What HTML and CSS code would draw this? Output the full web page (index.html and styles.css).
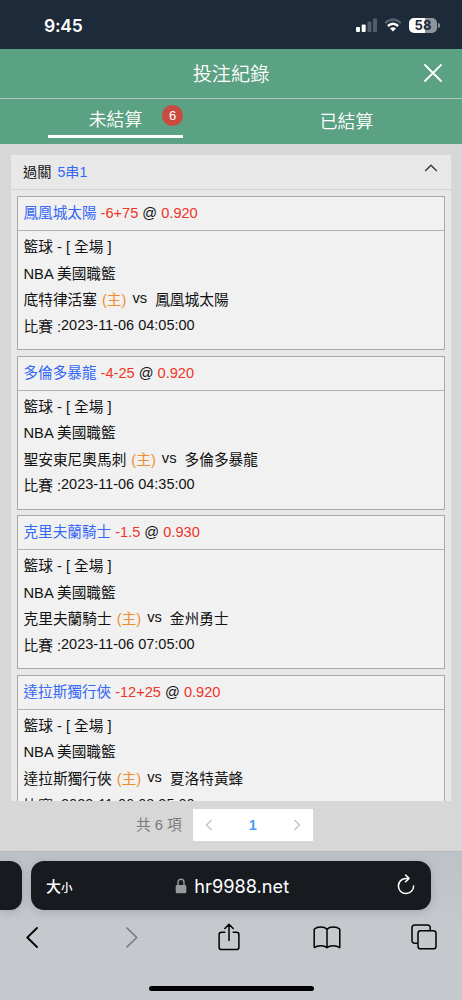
FILE: index.html
```html
<!DOCTYPE html>
<html lang="zh-Hant">
<head>
    <meta charset="UTF-8">
    <meta name="viewport" content="width=device-width, initial-scale=1.0">
    <title>投注紀錄</title>
    <link rel="stylesheet" href="styles.css">
</head>
<body>
    <div class="status-bar">
        <span class="time">9:45</span>
        <div class="status-icons">
            <svg width="22" height="14" viewBox="0 0 22 14">
                <rect x="0" y="9" width="4" height="5" rx="1" fill="#fff"/>
                <rect x="5.7" y="6.5" width="4" height="7.5" rx="1" fill="#fff"/>
                <rect x="11.4" y="3.5" width="4" height="10.5" rx="1" fill="#535d69"/>
                <rect x="17" y="0.5" width="4" height="13.5" rx="1" fill="#535d69"/>
            </svg>
            <svg class="wifi" width="18" height="14" viewBox="0 0 18 14">
                <path d="M1.2 5.2Q9-2 16.8 5.2" fill="none" stroke="#56606c" stroke-width="2.4"/>
                <path d="M3.9 8Q9 3.4 14.1 8" fill="none" stroke="#fff" stroke-width="2.4"/>
                <path d="M9 13.6L6 10.5Q9 8 12 10.5Z" fill="#fff"/>
            </svg>
            <div class="battery"><span>58</span></div>
        </div>
    </div>

    <div class="title-bar">
        <h1>投注紀錄</h1>
        <svg class="close" width="18" height="18" viewBox="0 0 18 18">
            <path d="M1 1L17 17M17 1L1 17" fill="none" stroke="#fff" stroke-width="1.8" stroke-linecap="round"/>
        </svg>
    </div>

    <div class="tabs">
        <div class="tab active"><span>未結算</span><span class="badge">6</span></div>
        <div class="tab"><span>已結算</span></div>
    </div>

    <div class="content">
        <div class="panel">
            <div class="panel-header">
                <span>過關</span>
                <span class="blue">5串1</span>
                <svg class="arrow" width="14" height="8" viewBox="0 0 14 8">
                    <path d="M1.2 7L7 1.2L12.8 7" fill="none" stroke="#333" stroke-width="1.3"/>
                </svg>
            </div>

            <div class="bet">
                <div class="bet-title"><span class="blue">鳳凰城太陽</span> <span class="red">-6+75</span> @ <span class="red">0.920</span></div>
                <div class="bet-info">
                    <div class="row">籃球 - [ 全場 ]</div>
                    <div class="row">NBA 美國職籃</div>
                    <div class="row">底特律活塞<span class="home">(主)</span><span class="vs">vs</span>鳳凰城太陽</div>
                    <div class="row">比賽 :<span class="date">2023-11-06 04:05:00</span></div>
                </div>
            </div>

            <div class="bet">
                <div class="bet-title"><span class="blue">多倫多暴龍</span> <span class="red">-4-25</span> @ <span class="red">0.920</span></div>
                <div class="bet-info">
                    <div class="row">籃球 - [ 全場 ]</div>
                    <div class="row">NBA 美國職籃</div>
                    <div class="row">聖安東尼奧馬刺<span class="home">(主)</span><span class="vs">vs</span>多倫多暴龍</div>
                    <div class="row">比賽 :<span class="date">2023-11-06 04:35:00</span></div>
                </div>
            </div>

            <div class="bet">
                <div class="bet-title"><span class="blue">克里夫蘭騎士</span> <span class="red">-1.5</span> @ <span class="red">0.930</span></div>
                <div class="bet-info">
                    <div class="row">籃球 - [ 全場 ]</div>
                    <div class="row">NBA 美國職籃</div>
                    <div class="row">克里夫蘭騎士<span class="home">(主)</span><span class="vs">vs</span>金州勇士</div>
                    <div class="row">比賽 :<span class="date">2023-11-06 07:05:00</span></div>
                </div>
            </div>

            <div class="bet">
                <div class="bet-title"><span class="blue">達拉斯獨行俠</span> <span class="red">-12+25</span> @ <span class="red">0.920</span></div>
                <div class="bet-info">
                    <div class="row">籃球 - [ 全場 ]</div>
                    <div class="row">NBA 美國職籃</div>
                    <div class="row">達拉斯獨行俠<span class="home">(主)</span><span class="vs">vs</span>夏洛特黃蜂</div>
                    <div class="row">比賽 :<span class="date">2023-11-06 08:35:00</span></div>
                </div>
            </div>
        </div>

        <div class="pagination">
            <span class="total">共 6 項</span>
            <div class="pager">
                <svg width="8" height="12" viewBox="0 0 8 12"><path d="M6.5 1L1.5 6L6.5 11" fill="none" stroke="#c0c4cc" stroke-width="1.4"/></svg>
                <span class="page">1</span>
                <svg width="8" height="12" viewBox="0 0 8 12"><path d="M1.5 1L6.5 6L1.5 11" fill="none" stroke="#c0c4cc" stroke-width="1.4"/></svg>
            </div>
        </div>
    </div>

    <div class="browser">
        <div class="address-row">
            <div class="prev-tab"></div>
            <div class="address">
                <span class="text-size">大<small>小</small></span>
                <div class="url">
                    <svg width="12" height="16" viewBox="0 0 12 16">
                        <path d="M3 7.5V4.2a3 3 0 0 1 6 0V7.5" fill="none" stroke="#98989d" stroke-width="1.4"/>
                        <rect x="0.7" y="7" width="10.6" height="8.3" rx="1.4" fill="#98989d"/>
                    </svg>
                    <span>hr9988.net</span>
                </div>
                <svg class="reload" width="18" height="21" viewBox="0 0 18 21">
                    <path d="M11 4.4H9A7.6 7.6 0 1 0 16.6 11.9" fill="none" stroke="#fff" stroke-width="1.5" stroke-linecap="round"/>
                    <path d="M8.6 1L12 4.4L8.6 7.8" fill="none" stroke="#fff" stroke-width="1.5" stroke-linecap="round" stroke-linejoin="round"/>
                </svg>
            </div>
        </div>
        <div class="toolbar">
            <svg width="12" height="21" viewBox="0 0 12 21"><path d="M11 1L1.3 10.5L11 20" fill="none" stroke="#000" stroke-width="1.8" stroke-linecap="round" stroke-linejoin="round"/></svg>
            <svg class="forward" width="12" height="21" viewBox="0 0 12 21"><path d="M1 1L10.7 10.5L1 20" fill="none" stroke="#75787c" stroke-width="1.6" stroke-linecap="round" stroke-linejoin="round"/></svg>
            <svg class="share" width="22" height="28" viewBox="0 0 22 28">
                <path d="M6.8 9.2H3.5a2.4 2.4 0 0 0-2.4 2.4V24.2a2.4 2.4 0 0 0 2.4 2.4H18.5a2.4 2.4 0 0 0 2.4-2.4V11.6a2.4 2.4 0 0 0-2.4-2.4H15.2M11 17.5V1.4M6.8 5.5L11 1.3L15.2 5.5" fill="none" stroke="#000" stroke-width="1.5" stroke-linecap="round" stroke-linejoin="round"/>
            </svg>
            <svg class="book" width="28" height="23" viewBox="0 0 28 23">
                <path d="M14 3.2C11.4.5 4.4.3 1.2 3.2V21.6C4.8 19 11 19 14 21.6C17 19 23.2 19 26.8 21.6V3.2C23.6.3 16.6.5 14 3.2V21.6" fill="none" stroke="#000" stroke-width="1.5" stroke-linejoin="round"/>
            </svg>
            <svg class="windows" width="26" height="26" viewBox="0 0 26 26">
                <path d="M6.8 19.2H3.6A2.5 2.5 0 0 1 1 16.7V3.6A2.6 2.6 0 0 1 3.6 1H16.7A2.5 2.5 0 0 1 19.2 3.6V6.5" fill="none" stroke="#000" stroke-width="1.5"/>
                <rect x="7" y="6.7" width="18" height="18.1" rx="2.6" fill="none" stroke="#000" stroke-width="1.5"/>
            </svg>
        </div>
        <div class="home-bar"></div>
    </div>
</body>
</html>
```
FILE: styles.css
```css
* {
    box-sizing: border-box;
}

body {
    margin: 0;
    width: 462px;
    height: 1000px;
    overflow: hidden;
    display: flex;
    flex-direction: column;
    background-color: #d7d7d7;
    font-family: "Liberation Sans", "Noto Sans CJK TC", sans-serif;
    color: #111;
}

svg {
    display: block;
    flex-shrink: 0;
}

.status-bar {
    height: 49px;
    flex-shrink: 0;
    background-color: #1d2a39;
    color: #fff;
    display: flex;
    justify-content: space-between;
    align-items: center;
    padding: 1px 20px 0 44px;
}

.time {
    font-family: Inter, sans-serif;
    font-size: 17.5px;
    font-weight: 600;
    letter-spacing: -0.2px;
}

.status-icons {
    display: flex;
    align-items: center;
}

.wifi {
    margin: 0 7px 0 6px;
}

.battery {
    position: relative;
    width: 28px;
    height: 15px;
    border-radius: 5px;
    background: linear-gradient(90deg, #fff 58%, #8e959d 58%);
    color: #1d2a39;
    font-family: Inter, sans-serif;
    font-size: 13px;
    font-weight: 700;
    line-height: 15px;
    text-align: center;
    margin-right: 5px;
}

.battery::after {
    content: "";
    position: absolute;
    right: -3px;
    top: 5px;
    width: 2px;
    height: 5px;
    border-radius: 0 2px 2px 0;
    background-color: #8e959d;
}

.title-bar {
    position: relative;
    height: 50px;
    flex-shrink: 0;
    display: flex;
    align-items: center;
    justify-content: center;
    background-color: #5ba183;
    border-bottom: 1px solid #b9c3be;
}

.title-bar h1 {
    margin: 0;
    padding-top: 3px;
    color: #fff;
    font-size: 19.2px;
    font-weight: 350;
    line-height: 28px;
}

.close {
    position: absolute;
    right: 20px;
    top: 15px;
}

.tabs {
    height: 45px;
    flex-shrink: 0;
    display: flex;
    background-color: #5ba183;
    color: #fff;
    font-size: 17.8px;
    font-weight: 350;
}

.tab {
    flex: 1;
    display: flex;
    align-items: center;
    justify-content: center;
    padding-bottom: 3px;
}

.tab.active {
    position: relative;
    flex: none;
    width: 135px;
    height: 39px;
    margin: 0 48px;
    border-bottom: 3px solid #fff;
    padding: 1px 0 0;
}

.badge {
    position: absolute;
    right: 0;
    top: 6px;
    width: 21px;
    height: 21px;
    border-radius: 50%;
    background-color: #ca4a40;
    font-size: 13px;
    line-height: 21px;
    text-align: center;
}

.content {
    flex: 1;
    min-height: 0;
    padding: 11px 11px 0;
}

.panel {
    height: 646px;
    overflow: hidden;
    background-color: #e8e8e8;
    font-size: 14.7px;
}

.panel-header {
    height: 35.4px;
    display: flex;
    align-items: center;
    gap: 6px;
    padding: 0 13px 3px 12px;
    border-bottom: 1px solid #d2d2d2;
    font-size: 14.2px;
}

.arrow {
    margin: -6px 0 0 auto;
}

.blue {
    color: #3568f5;
}

.red {
    color: #ee3528;
}

.bet {
    height: 154px;
    margin: 5.6px 6px 0;
    border: 1px solid #a9a9a9;
    background-color: #f1f1f1;
}

.bet-title {
    height: 34px;
    padding-left: 5.5px;
    border-bottom: 1px solid #b4b4b4;
    line-height: 33px;
    white-space: nowrap;
    font-size: 14.6px;
}

.bet-info {
    padding: 3px 5.5px;
}

.row {
    display: flex;
    height: 26.6px;
    line-height: 26.6px;
    white-space: pre;
}

.home {
    margin-left: 5px;
    color: #f18d2c;
}

.vs {
    margin: -2px 8px 0 6px;
}

.date {
    margin-top: -2px;
    font-size: 14.5px;
}

.pagination {
    display: flex;
    align-items: center;
    gap: 11px;
    padding: 8px 0 0 125px;
}

.total {
    margin-top: -3px;
    color: #77797c;
    font-size: 14.7px;
}

.pager {
    width: 120px;
    height: 32px;
    padding: 0 12px;
    display: flex;
    align-items: center;
    justify-content: space-between;
    background-color: #fff;
}

.page {
    color: #4c9cff;
    font-size: 14.5px;
    font-weight: bold;
}

.browser {
    height: 149px;
    flex-shrink: 0;
    border-top: 1px solid #b7bbbf;
    background: linear-gradient(#bdc2c7, #c5c8cd 50%);
}

.address-row {
    display: flex;
    gap: 9px;
    padding-top: 9px;
}

.prev-tab {
    width: 22px;
    height: 49px;
    border-radius: 0 12px 12px 0;
    background-color: #171b20;
    box-shadow: 0 2px 10px rgba(0, 0, 0, 0.15);
}

.address {
    position: relative;
    width: 400px;
    height: 49px;
    padding: 0 16px 0 15px;
    display: flex;
    align-items: center;
    justify-content: space-between;
    border-radius: 13px;
    background-color: #171b20;
    box-shadow: 0 2px 10px rgba(0, 0, 0, 0.15);
    color: #fff;
}

.text-size {
    font-size: 15px;
    font-weight: 500;
}

.text-size small {
    font-size: 11.5px;
}

.url {
    display: flex;
    align-items: center;
    gap: 7px;
    margin-right: 5px;
    font-family: Inter, sans-serif;
    font-size: 18.2px;
}

.reload {
    margin-top: -3px;
}

.toolbar {
    display: flex;
    align-items: center;
    height: 54px;
    padding: 0 25px 0 26px;
}

.forward {
    margin-left: 88px;
}

.share {
    margin-left: 80px;
}

.book {
    margin-left: 73px;
}

.windows {
    margin-left: 70px;
}

.home-bar {
    width: 165px;
    height: 5px;
    margin: 22px auto 0;
    border-radius: 3px;
    background-color: #000;
}
```
